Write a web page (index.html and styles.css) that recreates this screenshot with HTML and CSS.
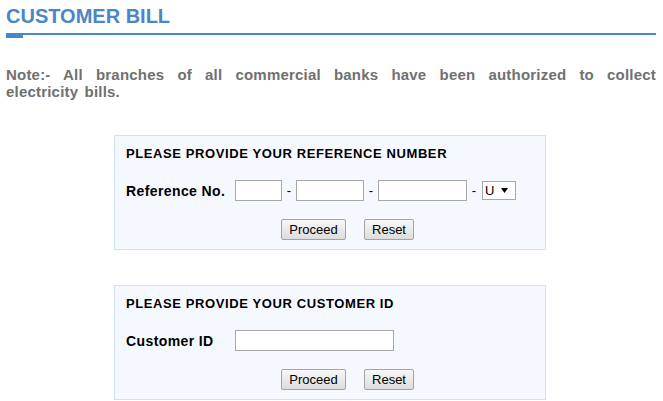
FILE: index.html
```html
<!DOCTYPE html>
<html lang="en">
<head>
<meta charset="utf-8">
<title>Customer Bill</title>
<link rel="stylesheet" href="styles.css">
</head>
<body>
<div class="page">
  <h1 class="title">CUSTOMER BILL</h1>
  <div class="rule"><div class="rule-mark"></div></div>
  <p class="note">Note:- All branches of all commercial banks have been authorized to collect electricity bills.</p>

  <form class="panel">
    <div class="panel-head">PLEASE PROVIDE YOUR REFERENCE NUMBER</div>
    <div class="field-row">
      <label class="field-label">Reference No.</label>
      <input class="in in-1" type="text">
      <span class="dash">-</span>
      <input class="in in-2" type="text">
      <span class="dash">-</span>
      <input class="in in-3" type="text">
      <span class="dash">-</span>
      <span class="sel-wrap">
        <select class="sel"><option>U</option></select>
        <svg class="sel-arrow" width="7" height="5" viewBox="0 0 7 5"><path d="M0 0H7L3.5 5Z" fill="#000"/></svg>
      </span>
    </div>
    <div class="btn-row">
      <button type="button" class="btn btn-proceed">Proceed</button>
      <button type="reset" class="btn btn-reset">Reset</button>
    </div>
  </form>

  <form class="panel">
    <div class="panel-head">PLEASE PROVIDE YOUR CUSTOMER ID</div>
    <div class="field-row">
      <label class="field-label">Customer ID</label>
      <input class="in in-cid" type="text">
    </div>
    <div class="btn-row">
      <button type="button" class="btn btn-proceed">Proceed</button>
      <button type="reset" class="btn btn-reset">Reset</button>
    </div>
  </form>
</div>
</body>
</html>
```

FILE: styles.css
```css
html, body {
  margin: 0;
  padding: 0;
  background: #fff;
}
body {
  font-family: "Liberation Sans", Arial, sans-serif;
  color: #000;
}
.page {
  width: 650px;
  padding: 4px 0 0 6px;
}
.title {
  margin: 0;
  font-size: 20px;
  line-height: 24px;
  font-weight: bold;
  color: #4a86c8;
}
.rule {
  margin-top: 5px;
  height: 2px;
  background: #4a87c9;
}
.rule-mark {
  width: 17px;
  height: 5px;
  background: #4a87c9;
}
.note {
  margin: 31px 0 0;
  font-size: 15px;
  line-height: 17px;
  font-weight: bold;
  letter-spacing: 0.2px;
  word-spacing: 2px;
  color: #707070;
  text-align: justify;
}
.panel {
  margin: 35px 0 0 108px;
  width: 408px;
  padding: 10px 11px 9px;
  border: 1px solid #cde1f7;
  background: #f5f9ff;
}
.panel-head {
  font-size: 13px;
  line-height: 16px;
  font-weight: bold;
  letter-spacing: 0.6px;
  color: #000;
}
.field-row {
  display: flex;
  align-items: center;
  height: 21px;
  margin-top: 18px;
}
.field-label {
  width: 109px;
  flex: none;
  font-size: 14px;
  font-weight: bold;
  letter-spacing: 0.4px;
}
.in {
  box-sizing: border-box;
  height: 21px;
  margin: 0;
  padding: 1px 2px;
  border: 1px solid #a9a9a9;
  background: #fff;
  font: 13px "Liberation Sans", Arial, sans-serif;
  flex: none;
}
.in-1 { width: 47px; }
.in-2 { width: 68px; }
.in-3 { width: 89px; }
.in-cid { width: 159px; }
.dash {
  width: 14px;
  flex: none;
  text-align: center;
  font-size: 13px;
}
.sel-wrap {
  position: relative;
  display: block;
  width: 34px;
  height: 19px;
  margin-left: 1px;
  flex: none;
}
.sel {
  -webkit-appearance: none;
  appearance: none;
  box-sizing: border-box;
  width: 34px;
  height: 19px;
  margin: 0;
  padding: 0 0 0 2px;
  border: 1px solid #a9a9a9;
  border-radius: 0;
  background: #fff;
  font: 13px "Liberation Sans", Arial, sans-serif;
  color: #000;
}
.sel-arrow {
  position: absolute;
  right: 8px;
  top: 7px;
  pointer-events: none;
}
.btn-row {
  display: flex;
  gap: 18px;
  height: 21px;
  margin-top: 18px;
  padding-left: 155px;
}
.btn {
  box-sizing: border-box;
  height: 21px;
  margin: 0;
  padding: 0;
  border: 1px solid #a3a3a3;
  border-radius: 2px;
  background: linear-gradient(#f7f7f7, #dddddd);
  font: 13px "Liberation Sans", Arial, sans-serif;
  color: #000;
}
.btn-proceed { width: 65px; }
.btn-reset { width: 50px; }
```
